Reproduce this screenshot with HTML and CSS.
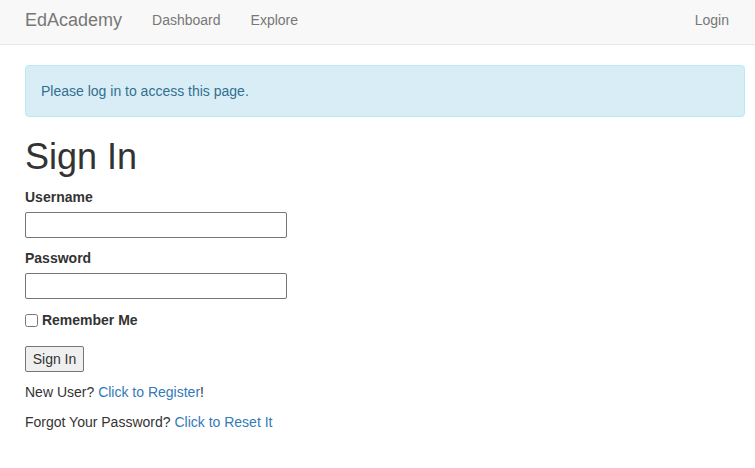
FILE: index.html
```html
<!DOCTYPE html>
<html lang="en">
<head>
  <meta charset="UTF-8">
  <meta name="viewport" content="width=device-width, initial-scale=1.0">
  <title>Sign In - EdAcademy</title>
  <link rel="stylesheet" href="styles.css">
</head>
<body>
  <nav class="navbar">
    <a href="#" class="brand">EdAcademy</a>
    <a href="#" class="nav-link">Dashboard</a>
    <a href="#" class="nav-link">Explore</a>
    <a href="#" class="nav-link nav-right">Login</a>
  </nav>

  <div class="container">
    <div class="alert">Please log in to access this page.</div>

    <h1>Sign In</h1>
    <form action="" method="post">
      <p class="field">
        <label for="username">Username</label>
        <input id="username" name="username" type="text" class="text-input">
      </p>
      <p class="field">
        <label for="password">Password</label>
        <input id="password" name="password" type="password" class="text-input">
      </p>
      <p class="check">
        <input id="remember_me" name="remember_me" type="checkbox"> <label for="remember_me">Remember Me</label>
      </p>
      <p class="submit"><input type="submit" value="Sign In" class="btn"></p>
    </form>
    <p class="line">New User? <a href="#">Click to Register</a>!</p>
    <p class="line">Forgot Your Password? <a href="#">Click to Reset It</a></p>
  </div>
</body>
</html>
```

FILE: styles.css
```css
body {
  margin: 0;
  font-family: "Liberation Sans", Arial, sans-serif;
  font-size: 14px;
  line-height: 20px;
  color: #333;
  background: #fff;
}
a {
  color: #337ab7;
  text-decoration: none;
}
.navbar {
  display: flex;
  height: 44px;
  padding: 0 11px;
  background-color: #f8f8f8;
  border-bottom: 1px solid #e7e7e7;
}
.navbar a {
  color: #777;
  padding: 10px 15px 14px;
  line-height: 20px;
}
.brand {
  font-size: 18px;
  padding-left: 14px !important;
}
.nav-right {
  margin-left: auto;
}
.container {
  padding: 0 10px 0 25px;
}
.alert {
  margin: 20px 0;
  padding: 15px;
  background-color: #d9edf7;
  border: 1px solid #bce8f1;
  border-radius: 4px;
  color: #31708f;
}
h1 {
  margin: 20px 0 10px;
  font-size: 36px;
  font-weight: 500;
  line-height: 1.1;
}
p {
  margin: 0 0 10px;
}
label {
  font-weight: bold;
}
.field label {
  display: block;
}
.text-input {
  display: block;
  box-sizing: border-box;
  width: 262px;
  height: 26px;
  margin-top: 5px;
  padding: 1px 2px;
  border: 1px solid #767676;
  border-radius: 2px;
  font-family: inherit;
  font-size: 14px;
}
.check {
  padding-top: 1px;
}
.check input {
  margin: 0;
  width: 13px;
  height: 13px;
  vertical-align: -2px;
}
.submit {
  padding-top: 6px;
}
.btn {
  box-sizing: border-box;
  height: 26px;
  width: 59px;
  padding: 1px 6px;
  background: #efefef;
  border: 1px solid #767676;
  border-radius: 2px;
  font-family: inherit;
  font-size: 14px;
  color: #333;
  vertical-align: top;
}
.line {
  margin-bottom: 10px;
}
```
